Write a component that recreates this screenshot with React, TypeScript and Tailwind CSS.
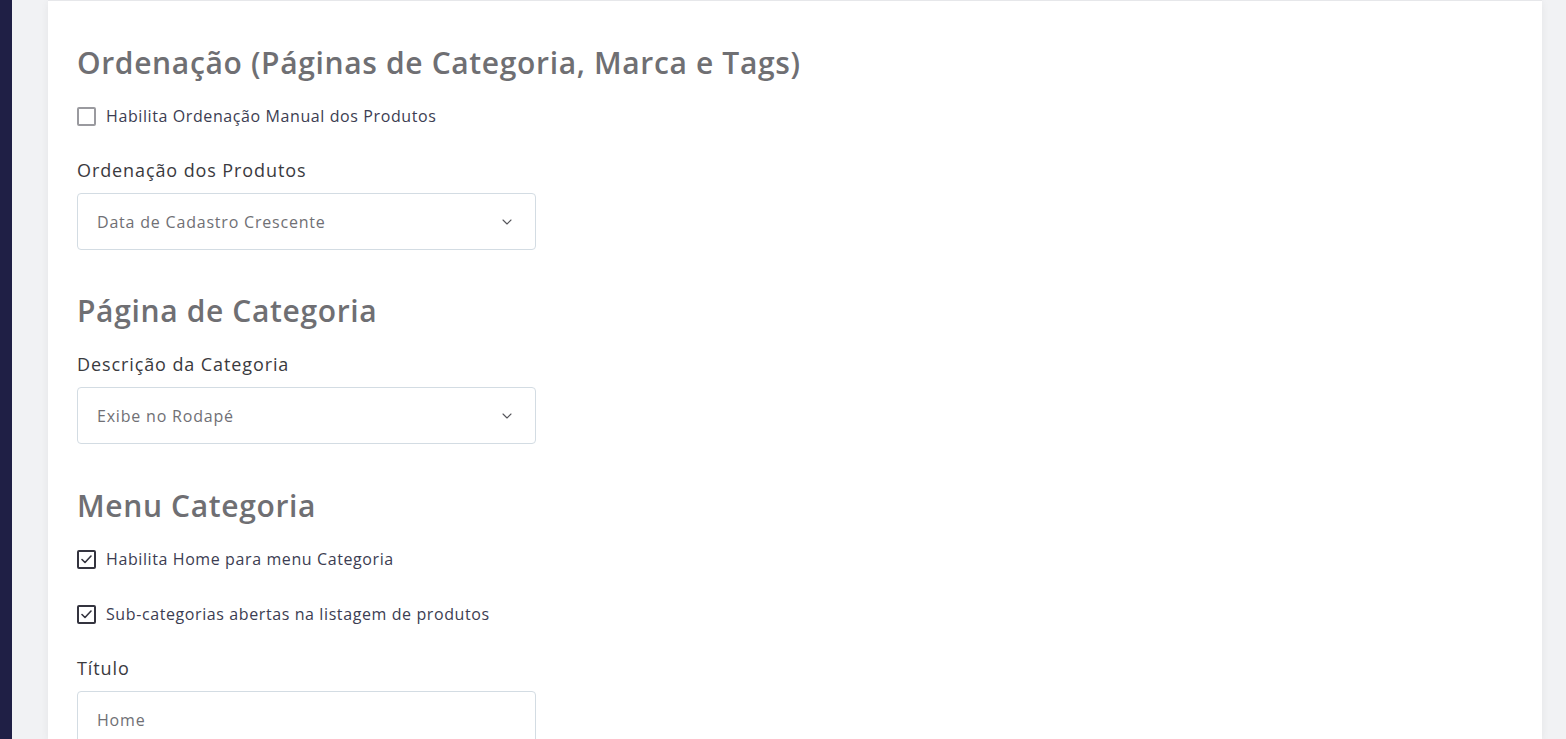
import { ChevronDown } from "lucide-react";

const font = { fontFamily: "'Open Sans', 'Noto Sans', sans-serif" };

function Checkbox({ checked, label }: { checked?: boolean; label: string }) {
  return (
    <label className="flex items-center gap-[10px] h-6 cursor-pointer">
      <span
        className={`flex items-center justify-center w-[19px] h-[19px] rounded-[2px] border-2 ${
          checked ? "border-[#34343f]" : "border-[#9a9a9f]"
        }`}
      >
        {checked && (
          <svg width="11" height="9" viewBox="0 0 11 9" fill="none">
            <path d="M1 4.5L4 7.5L10 1" stroke="#34343f" strokeWidth="1.6" strokeLinecap="round" strokeLinejoin="round" />
          </svg>
        )}
      </span>
      <span className="text-[16px] text-[#3c3d52] tracking-[0.6px]">{label}</span>
    </label>
  );
}

function Select({ value }: { value: string }) {
  return (
    <div className="flex items-center justify-between w-[459px] h-[57px] mt-[11px] pl-[19px] pr-[20px] border border-[#d3dce3] rounded-[4px] bg-white">
      <span className="text-[16px] text-[#707075] tracking-[0.8px]">{value}</span>
      <ChevronDown size={16} strokeWidth={1.6} className="text-[#55555a]" />
    </div>
  );
}

function Heading({ children, className = "" }: { children: string; className?: string }) {
  return (
    <h2 className={`text-[30px] leading-[36px] font-semibold text-[#6f6f73] tracking-[0.65px] ${className}`}>
      {children}
    </h2>
  );
}

function Label({ children, className = "" }: { children: string; className?: string }) {
  return <div className={`text-[18px] leading-6 text-[#3a3a3e] tracking-[0.9px] ${className}`}>{children}</div>;
}

export default function App() {
  return (
    <div className="flex h-screen overflow-hidden bg-[#f1f2f4]" style={font}>
      <div className="w-[12px] bg-[#1f1f45] shrink-0" />
      <div className="flex-1 pl-[36px] pr-[24px]">
        <div className="h-full bg-white shadow-[0_2px_8px_rgba(0,0,0,0.06)] border-t border-[#e6e7ea] pt-[44px] pl-[29px]">
          <Heading>Ordenação (Páginas de Categoria, Marca e Tags)</Heading>
          <div className="mt-[23px]">
            <Checkbox label="Habilita Ordenação Manual dos Produtos" />
          </div>
          <Label className="mt-[30px]">Ordenação dos Produtos</Label>
          <Select value="Data de Cadastro Crescente" />

          <Heading className="mt-[43px]">Página de Categoria</Heading>
          <Label className="mt-[23px]">Descrição da Categoria</Label>
          <Select value="Exibe no Rodapé" />

          <Heading className="mt-[44px]">Menu Categoria</Heading>
          <div className="mt-[23px]">
            <Checkbox checked label="Habilita Home para menu Categoria" />
          </div>
          <div className="mt-[31px]">
            <Checkbox checked label="Sub-categorias abertas na listagem de produtos" />
          </div>
          <Label className="mt-[30px]">Título</Label>
          <div className="flex items-center w-[459px] h-[57px] mt-[11px] pl-[19px] pr-[20px] border border-[#d3dce3] rounded-[4px] bg-white">
            <span className="text-[16px] text-[#707075] tracking-[0.8px]">Home</span>
          </div>
        </div>
      </div>
    </div>
  );
}
